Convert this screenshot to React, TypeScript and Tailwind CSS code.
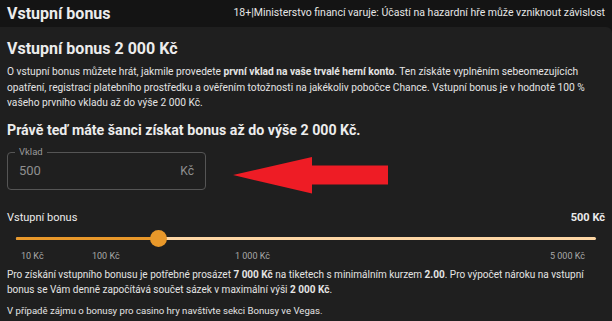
import React from 'react';

const marks = [
  { label: '10 Kč', left: 5 },
  { label: '100 Kč', left: 76 },
  { label: '1 000 Kč', left: 219 },
  { label: '5 000 Kč', left: 534 },
];

export default function App() {
  const value = 24.5;

  return (
    <div className="w-[612px] h-[321px] overflow-hidden bg-[#141414] text-[#ececec] font-['Roboto',sans-serif]">
      <header className="h-[27px] flex items-center justify-between pl-[7px] pr-[7px]">
        <h1 className="text-[16px] font-bold leading-none">Vstupní bonus</h1>
        <p className="text-[10.5px] leading-none text-[#e6e6e6]">18+|Ministerstvo financí varuje: Účastí na hazardní hře může vzniknout závislost</p>
      </header>

      <main className="h-[294px] bg-[#1f1f1f] rounded-tr-[6px] px-[7px] pt-[12px]">
        <h2 className="text-[16px] font-bold leading-[20px]">Vstupní bonus 2 000 Kč</h2>
        <p className="mt-[5px] max-w-[590px] text-[10.2px] leading-[15.5px] text-[#e4e4e4]">
          O vstupní bonus můžete hrát, jakmile provedete <b>první vklad na vaše trvalé herní konto</b>. Ten získáte vyplněním sebeomezujících opatření, registrací platebního prostředku a ověřením totožnosti na jakékoliv pobočce Chance. Vstupní bonus je v hodnotě 100 % vašeho prvního vkladu až do výše 2 000 Kč.
        </p>

        <h3 className="mt-[10px] text-[14.2px] font-bold leading-[18px]">Právě teď máte šanci získat bonus až do výše 2 000 Kč.</h3>

        <div className="mt-[13px] flex items-start">
          <div className="relative w-[199px] h-[38px] border border-[#555] rounded-[4px] flex items-center justify-between px-[11px]">
            <span className="absolute -top-[7px] left-[7px] px-[4px] bg-[#1f1f1f] text-[9.5px] leading-[12px] text-[#9a9a9a]">Vklad</span>
            <span className="text-[13px] text-[#8f8f8f]">500</span>
            <span className="text-[12px] text-[#8f8f8f]">Kč</span>
          </div>
          <svg className="ml-[27px] mt-[5px]" width="156" height="38" viewBox="0 0 156 38">
            <polygon points="0,18 79,0 79,8.5 155,8.5 155,27.5 79,27.5 79,36.5" fill="#ee1c25" />
          </svg>
        </div>

        <div className="mt-[16px] flex items-center justify-between text-[11px] leading-[14px]">
          <span>Vstupní bonus</span>
          <span className="font-bold">500 Kč</span>
        </div>

        <div className="relative mx-[9px] mt-[6px] h-[35px]">
          <div className="absolute top-[6px] left-0 right-0 h-[3px] rounded-full bg-[#fdd6a4]" />
          <div className="absolute top-[6px] left-0 h-[3px] rounded-full bg-[#e8982a]" style={{ width: `${value}%` }} />
          <div className="absolute top-[-1px] w-[17px] h-[17px] -ml-[8px] rounded-full bg-[#e8982a]" style={{ left: `${value}%` }} />
          {marks.map(m => (
            <span key={m.label} className="absolute top-[19px] text-[9px] leading-[12px] text-[#a8a8a8]" style={{ left: m.left }}>{m.label}</span>
          ))}
        </div>

        <p className="mt-[1px] text-[10px] leading-[15.5px] text-[#e4e4e4]">
          Pro získání vstupního bonusu je potřebné prosázet <b>7 000 Kč</b> na tiketech s minimálním kurzem <b>2.00</b>. Pro výpočet nároku na vstupní bonus se Vám denně započítává součet sázek v maximální výši <b>2 000 Kč</b>.
        </p>
        <p className="mt-[5px] text-[9.6px] leading-[15.5px] text-[#e4e4e4]">
          V případě zájmu o bonusy pro casino hry navštívte sekci Bonusy ve Vegas.
        </p>
      </main>
    </div>
  );
}
